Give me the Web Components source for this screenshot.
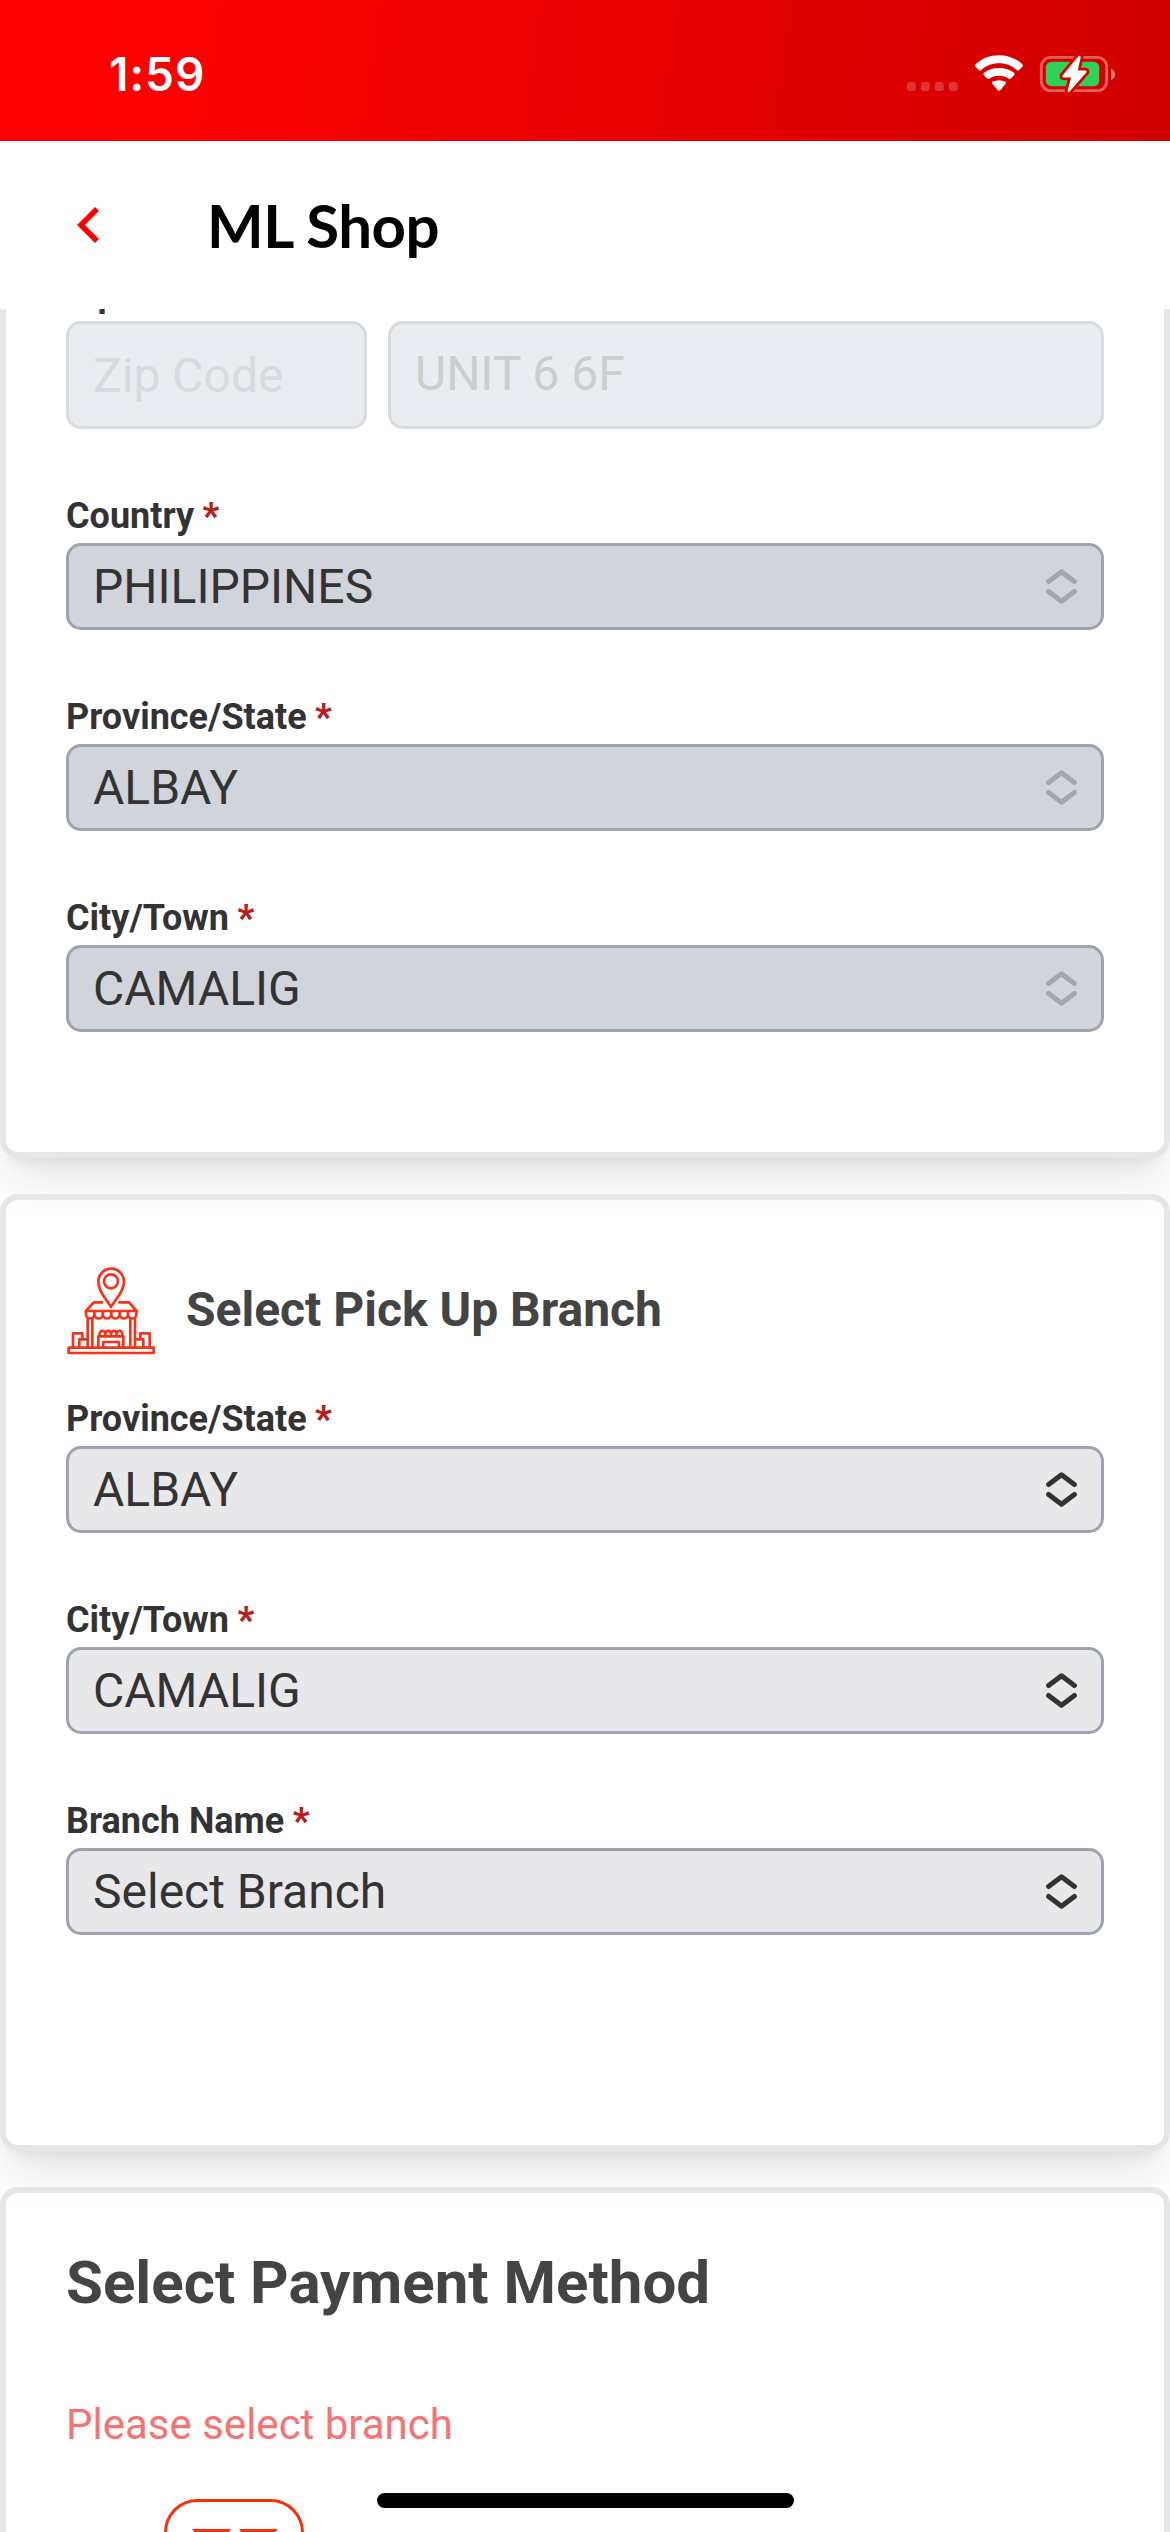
<!DOCTYPE html>
<html lang="en">
<head>
<meta charset="utf-8">
<title>ML Shop</title>
<style>
html,body{margin:0;padding:0;background:#fff}
body{width:1170px;height:2532px;overflow:hidden;font-family:Roboto,"Liberation Sans",sans-serif;color:#333}
</style>
</head>
<body>
<shop-screen>
  <status-bar slot="top" time="1:59"></status-bar>
  <app-header slot="top">ML Shop</app-header>
  <shop-card class="address">
    <field-row>
      <text-field label="Zip Code" style="width:301px">Zip Code</text-field>
      <text-field filled style="flex:1">UNIT 6 6F</text-field>
    </field-row>
    <select-field label="Country" disabled>PHILIPPINES</select-field>
    <select-field label="Province/State" disabled>ALBAY</select-field>
    <select-field label="City/Town" disabled>CAMALIG</select-field>
  </shop-card>
  <shop-card class="pickup">
    <branch-title>Select Pick Up Branch</branch-title>
    <select-field label="Province/State">ALBAY</select-field>
    <select-field label="City/Town">CAMALIG</select-field>
    <select-field label="Branch Name">Select Branch</select-field>
  </shop-card>
  <shop-card class="payment">
    <payment-panel heading="Select Payment Method">Please select branch</payment-panel>
  </shop-card>
</shop-screen>
<script>
const define = (name, html) => customElements.define(name, class extends HTMLElement {
  connectedCallback() {
    if (this.shadowRoot) return;
    const root = this.attachShadow({ mode: 'open' });
    root.innerHTML = typeof html === 'function' ? html(this) : html;
  }
});

define('shop-screen', `<style>
:host{display:flex;flex-direction:column;width:1170px;height:2532px;position:relative;overflow:hidden;background:#fff}
main{flex:1;min-height:0;overflow:hidden;display:flex;flex-direction:column;gap:36px}
::slotted(.address){margin-top:-100px;--pad:54px 60px 120px}
::slotted(.pickup){--pad:65px 60px 210px}
::slotted(.payment){--pad:45px 60px 60px}
.home{position:absolute;left:377px;top:2493px;width:417px;height:15px;border-radius:8px;background:#000}
</style><slot name="top"></slot><main><slot></slot></main><div class="home"></div>`);

define('status-bar', el => `<style>
:host{display:flex;flex:none;height:141px;box-sizing:border-box;background:linear-gradient(98deg,#f00 8%,#d00000 100%);justify-content:space-between;padding:0 54px 0 109px}
.time{font:600 46px/60px Inter,sans-serif;color:#fff;margin-top:44px;letter-spacing:1px}
svg{display:block;margin-top:40px}
</style><span class="time">${el.getAttribute('time')}</span>
<svg width="214" height="70" viewBox="902 40 214 70">
<g fill="#fff" fill-opacity=".2"><rect x="906.8" y="82" width="9" height="9" rx="3"/><rect x="920.8" y="82" width="9" height="9" rx="3"/><rect x="934.8" y="82" width="9" height="9" rx="3"/><rect x="948.8" y="82" width="9" height="9" rx="3"/></g>
<g fill="#fff"><path d="M975.6 66.8Q974.4 65.5 975.7 64.2C981.600 58.600 989.800 55.300 999 55.300S1016.400 58.600 1022.300 64.200Q1023.600 65.500 1022.400 66.800L1019.300 69.900Q1018 71 1016.700 69.900C1012 65.600 1006 63.200 999 63.200S986 65.600 981.300 69.900Q980 71 978.700 69.900Z"/>
<path d="M983.900 75.200Q982.700 74 984 72.800C988 69.600 993 67.900 999 67.900S1010 69.600 1014 72.800Q1015.300 74 1014.100 75.200L1010.800 78.500Q1009.700 79.500 1008.400 78.500C1005.800 76.700 1002.800 75.700 999 75.700S992.200 76.700 989.600 78.500Q988.300 79.500 987.200 78.500Z"/>
<path d="M992.300 83.800Q991.200 82.500 992.600 81.800Q995.300 80.300 999 80.300T1005.400 81.800Q1006.800 82.500 1005.700 83.800L1000.200 90.200Q999 91.400 997.800 90.200Z"/></g>
<rect x="1041.300" y="57.300" width="65.400" height="33.400" rx="9.500" fill="none" stroke="#fff" stroke-opacity=".38" stroke-width="2.800"/>
<path d="M1111 68.500Q1115.200 70.500 1115.200 74.500T1111 80Z" fill="#fff" fill-opacity=".45"/>
<rect x="1045.800" y="61.800" width="53.400" height="24.400" rx="5.500" fill="#30d158"/>
<path d="M1078.800 55.800L1062.500 75.600Q1061.600 77.400 1063.600 77.500H1071.200L1067.600 90.300Q1067.300 92.200 1069 92.300L1086.300 72.500Q1087.300 70.500 1085.300 70.400H1077.700L1080.700 57.500Q1080.600 55.200 1078.800 55.800Z" fill="#fff" stroke="#d60000" stroke-width="5.500" paint-order="stroke" stroke-linejoin="round"/>
</svg>`);

define('app-header', `<style>
:host{display:flex;flex:none;height:168px;background:#fff;align-items:center;padding:0 75px;font:700 60px/72px Lato,sans-serif;color:#000;letter-spacing:-.5px}
svg{display:block;margin-right:106px}
</style><svg width="26" height="40" viewBox="75 205 26 40"><path d="M97 209L81 225L97 241" fill="none" stroke="#f00" stroke-width="5.600"/></svg><span><slot></slot></span>`);

define('shop-card', `<style>
:host{display:flex;flex-direction:column;gap:62px;flex:none;box-sizing:border-box;width:1170px;border:6px solid #e5e6ea;border-radius:18px;padding:var(--pad);box-shadow:0 30px 45px -9px rgba(0,0,0,.1),0 12px 18px -12px rgba(0,0,0,.1)}
::slotted(branch-title){margin-bottom:-23px}
</style><slot></slot>`);

define('field-row', `<style>:host{display:flex;gap:21px;align-items:flex-end}</style><slot></slot>`);

const labelCss = `.label{font:700 36px/48px Roboto,sans-serif;height:48px;padding-top:1px;white-space:pre;color:#333}.label b{color:#b91c1c;margin-left:-.5px}`;

define('text-field', el => `<style>
:host{display:flex;flex-direction:column;gap:3px;min-width:0}${labelCss}
.box{box-sizing:border-box;height:108px;border:3px solid #d8dadf;border-radius:15px;background:#e9ecf1;display:flex;align-items:center;padding:2px 24px 0;font-size:48px;line-height:72px;color:#d6d9dd}
:host([filled]) .box{color:#cdcdce;padding:0 24px 2px}
</style>${el.hasAttribute('label') ? `<div class="label">${el.getAttribute('label')}</div>` : ''}<div class="box"><span><slot></slot></span></div>`);

define('select-field', el => `<style>
:host{display:flex;flex-direction:column;gap:3px;color:#333}${labelCss}
.box{box-sizing:border-box;height:87px;border:3px solid #9ca3af;border-radius:15px;background:#e8e8ea;display:flex;align-items:center;justify-content:space-between;padding:0 24px;font-size:48px;line-height:72px}
:host([disabled]) .box{background:#d1d4db}
svg{display:block;stroke:#333}:host([disabled]) svg{stroke:#a3a6ae}
</style><div class="label">${el.getAttribute('label')} <b>*</b></div><div class="box"><span><slot></slot></span><svg width="31" height="35" viewBox="0 0 31 35" fill="none" stroke-width="5" stroke-linecap="round" stroke-linejoin="round"><path d="M2.600 12.500L15.500 2.700L28.400 12.500M2.600 22.500L15.500 32.300L28.400 22.500"/></svg></div>`);

define('branch-title', `<style>
:host{display:flex;align-items:center;gap:30px;height:90px;font-size:48px;line-height:72px;font-weight:700;color:#444}
svg{display:block}
</style><svg width="90" height="90" viewBox="48 45 270 270" fill="none" stroke="#f1341a" stroke-width="8" stroke-linejoin="round">
<path d="M183 171C171 148 145 127 145 95A38.500 39 0 0 1 222 95C222 127 195 148 183 171Z"/><circle cx="183" cy="94" r="21"/>
<path d="M160 157H131L108 183H260L237 157H205"/>
<path d="M108 183V193a12.600 12.600 0 0 0 25.200 0V183V193a12.600 12.600 0 0 0 25.200 0V183V193a12.600 12.600 0 0 0 25.200 0V183V193a12.600 12.600 0 0 0 25.200 0V183V193a12.600 12.600 0 0 0 25.200 0V183V193a12.600 12.600 0 0 0 25.200 0V183"/>
<path d="M113 205V291M127 205V291M241 205V291M255 205V291"/>
<path d="M56 293H311V309H56Z"/>
<path d="M69 291V250H97V268M88 291V268H112M299 291V250H271V268M280 291V268H256"/>
<path d="M145 291V259H220V291M160 291V276H207V291"/>
<path d="M149 258V251a8 8 0 0 1 17 0V258M166 251a8 8 0 0 1 17 0V258M183 251a8 8 0 0 1 17 0V258M200 251a8 8 0 0 1 17 0V258"/>
</svg><span><slot></slot></span>`);

define('payment-panel', el => `<style>
:host{display:flex;flex-direction:column}
h2{margin:0;font-size:60px;line-height:90px;font-weight:700;color:#444}
p{margin:65px 0 0;font-size:42px;line-height:63px;color:#f57373}
svg{display:block;margin:41px 0 0 96px}
</style><h2>${el.getAttribute('heading')}</h2><p><slot></slot></p>
<svg width="144" height="144" viewBox="162 2497 144 144"><rect x="165.500" y="2500.500" width="137" height="137" rx="32" fill="none" stroke="#f5300f" stroke-width="3"/><path d="M192 2529H231L223 2541H202ZM239 2529H278L268 2541H247Z" fill="#f5300f"/></svg>`);
</script>
</body>
</html>
